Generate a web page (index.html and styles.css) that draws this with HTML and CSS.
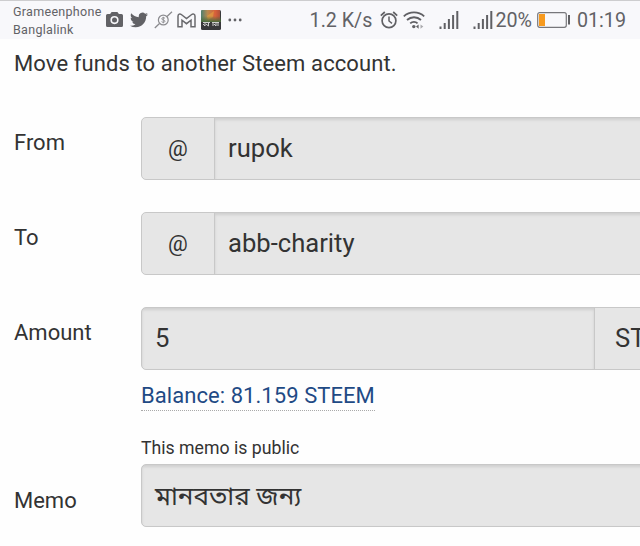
FILE: index.html
```
<!DOCTYPE html>
<html lang="en">
<head>
    <meta charset="UTF-8">
    <title>Transfer to Account</title>
    <link rel="stylesheet" href="styles.css">
</head>
<body>
    <!-- phone status bar -->
    <header class="status">
      <div class="carrier">
        <span>Grameenphone</span>
        <span>Banglalink</span>
      </div>
      <div class="notices">
        <svg class="camera" width="17" height="15" viewBox="0 0 17 15">
          <path fill="#626266" fill-rule="evenodd" d="M5.6 0h5.8l1.500 2H15.500a1.500 1.500 0 0 1 1.500 1.500v10a1.500 1.500 0 0 1-1.500 1.500h-14A1.500 1.500 0 0 1 0 13.500v-10A1.500 1.500 0 0 1 1.500 2h2.600zM8.500 4a4.100 4.100 0 1 0 0 8.200 4.100 4.100 0 0 0 0-8.200z"/>
          <circle cx="8.500" cy="8.100" r="2.500" fill="#626266"/>
        </svg>
        <svg class="bird" width="18" height="16" viewBox="0 2 24 20">
          <path fill="#626266" d="M23.953 4.570a10 10 0 0 1-2.825.775 4.958 4.958 0 0 0 2.163-2.723c-.951.555-2.005.959-3.127 1.184a4.920 4.920 0 0 0-8.384 4.482C7.690 8.095 4.067 6.130 1.640 3.162a4.822 4.822 0 0 0-.666 2.475c0 1.710.870 3.213 2.188 4.096a4.904 4.904 0 0 1-2.228-.616v.060a4.923 4.923 0 0 0 3.946 4.827 4.996 4.996 0 0 1-2.212.085 4.936 4.936 0 0 0 4.604 3.417 9.867 9.867 0 0 1-6.102 2.105c-.390 0-.779-.023-1.170-.067a13.995 13.995 0 0 0 7.557 2.209c9.053 0 13.998-7.496 13.998-13.985 0-.210 0-.420-.015-.630a9.935 9.935 0 0 0 2.460-2.548z"/>
        </svg>
        <svg class="coin" width="19" height="18" viewBox="0 0 19 18" fill="none" stroke="#8b8b8f">
          <circle cx="9.300" cy="9" r="4.900" stroke-width="1.200"/>
          <path d="M13 5.500L18 .8M5.500 12.500L.8 17" stroke-width="1.300"/>
          <path d="M11 7.300C10 6.300 7.600 6.500 7.700 7.900c.1 1.300 3.300.8 3.300 2.300 0 1.400-2.500 1.500-3.500.4M9.300 5.800v6.500" stroke-width=".9"/>
        </svg>
        <svg class="mail" width="19" height="15" viewBox="0 0 19 15" fill="none" stroke="#6a6a6e" stroke-width="1.500">
          <path d="M1 3.200C1 1 3 .5 4.300 1.500L9.500 5.500l5.200-4C16 .5 18 1 18 3.200V13.800h-4V7.200l-4.500 3.500L5 7.200v6.600H1z"/>
        </svg>
        <svg class="photo" width="20" height="20" viewBox="0 0 20 20">
          <defs>
            <linearGradient id="sunset" x1="0" y1="0" x2="1" y2="0">
              <stop offset="0" stop-color="#4f8070"/>
              <stop offset=".35" stop-color="#b98a50"/>
              <stop offset=".75" stop-color="#d9603a"/>
              <stop offset="1" stop-color="#b0503a"/>
            </linearGradient>
            <linearGradient id="shade" x1="0" y1="0" x2="0" y2="1">
              <stop offset=".5" stop-color="#4a6a3c" stop-opacity="0"/>
              <stop offset="1" stop-color="#4a6a3c"/>
            </linearGradient>
          </defs>
          <rect width="20" height="20" rx="1.500" fill="#39383b"/>
          <path fill="url(#sunset)" d="M1 0h18v12H0V1z"/>
          <path fill="#e8a13e" opacity=".6" d="M6 6l7-5-1 6-5 3z"/>
          <path fill="url(#shade)" d="M0 0h20v12H0z"/>
          <path stroke="#cfcecd" stroke-width="1" fill="none" d="M2 12.500h7M11 12.500h7M4 12v4L2 14M7.500 12v4L5 14M12 12v4M15 12v4l-2-2M17 12v4"/>
        </svg>
        <svg class="more" width="14" height="4" viewBox="0 0 14 4" fill="#626266">
          <circle cx="1.800" cy="2" r="1.400"/><circle cx="7" cy="2" r="1.400"/><circle cx="12.200" cy="2" r="1.400"/>
        </svg>
      </div>
      <div class="system">
        <span class="speed">1.2 K/s</span>
        <svg class="alarm" width="18" height="18" viewBox="0 0 18 18" fill="none" stroke="#606064">
          <circle cx="9" cy="9.800" r="6.900" stroke-width="1.700"/>
          <path d="M9 5.500V10l3 2.300" stroke-width="1.500"/>
          <path d="M.8 4.600L4.800 1M17.200 4.600L13.200 1" stroke-width="1.700"/>
        </svg>
        <svg class="wifi" width="22" height="18" viewBox="0 0 22 18" fill="none" stroke="#606064" stroke-width="1.800">
          <path d="M.8 5.400C6.500.1 15.500.1 21.200 5.400M4 9c4-3.700 10-3.700 14 0M7.200 12.400c2.100-1.900 5.300-1.900 7.400 0"/>
          <circle cx="10.800" cy="15.600" r="1.700" fill="#606064" stroke="none"/>
          <path fill="#606064" stroke="none" d="M13 15.600l2.600-2.200v4.400z"/>
          <path fill="#a9a9ad" stroke="none" d="M17.500 13.400l2.800 2.200-2.800 2.200z"/>
        </svg>
        <svg class="bars" width="20" height="18" viewBox="0 0 20 18" fill="#606064">
          <path d="M.5 15.500h2V18h-2zM4.700 12h2v6h-2zM8.900 8h2v10h-2zM13.100 4h2v14h-2zM17.300 0h2v18h-2z"/>
        </svg>
        <svg class="bars" width="20" height="18" viewBox="0 0 20 18" fill="#606064">
          <path d="M.5 15.500h2V18h-2zM4.700 12h2v6h-2zM8.900 8h2v10h-2zM13.100 4h2v14h-2zM17.300 0h2v18h-2z"/>
        </svg>
        <span class="percent">20%</span>
        <svg class="battery" width="34" height="16" viewBox="0 0 34 16">
          <rect x=".7" y=".7" width="28.600" height="14.600" rx="2" fill="none" stroke="#77777b" stroke-width="1.200"/>
          <rect x="2" y="2" width="6" height="12" fill="#f79a1e"/>
          <path fill="#606064" d="M31 3h2v9.500h-2z"/>
        </svg>
        <span class="clock">01:19</span>
      </div>
    </header>

    <!-- transfer form -->
    <main class="transfer">
      <p class="intro">Move funds to another Steem account.</p>

      <div class="row">
        <label class="name">From</label>
        <div class="group">
          <span class="at">@</span>
          <div class="field">rupok</div>
        </div>
      </div>

      <div class="row">
        <label class="name">To</label>
        <div class="group">
          <span class="at">@</span>
          <div class="field">abb-charity</div>
        </div>
      </div>

      <div class="row amount">
        <label class="name">Amount</label>
        <div class="group">
          <div class="field">5</div>
          <span class="unit">STEEM</span>
        </div>
      </div>
      <div class="balance"><a>Balance: 81.159 STEEM</a></div>

      <div class="hint">This memo is public</div>
      <div class="row">
        <label class="name memo">Memo</label>
        <div class="group">
          <div class="field bn" lang="bn">মানবতার জন্য</div>
        </div>
      </div>
    </main>
</body>
</html>
```

FILE: styles.css
```
*{
  box-sizing: border-box;
}
body{
  margin: 0;
  height: 546px;
  overflow: hidden;
  background: #fefefe;
  color: #333;
  font-family: Roboto, "Noto Sans Bengali", "Noto Sans", sans-serif;
}

/* status bar */
.status{
  display: flex;
  justify-content: space-between;
  height: 39px;
  padding: 0 14px 0 13px;
  border-top: 1px solid #cdcdcf;
  background: #f8f8fb;
  color: #626266;
}
.carrier{
  display: flex;
  flex-direction: column;
  width: 93px;
  padding-top: 2px;
  font-size: 12.5px;
  line-height: 18px;
  letter-spacing: .3px;
}
.notices{
  display: flex;
  align-items: center;
  flex: 1;
}
.camera{
  margin-top: -2px;
}
.bird{
  margin-left: 7px;
}
.coin{
  margin-left: 6px;
}
.mail{
  margin-left: 4px;
}
.photo{
  margin-left: 5px;
}
.more{
  margin-left: 7px;
  margin-top: -1px;
}
.system{
  display: flex;
  align-items: center;
  font-size: 19.7px;
}
.alarm{
  margin-left: 8px;
}
.wifi{
  margin-left: 5px;
}
.bars{
  margin-left: 14px;
}
.percent{
  margin-left: 2px;
}
.battery{
  margin-left: 5px;
}
.clock{
  margin-left: 6px;
}

/* form */
.transfer{
  width: 760px;
  padding: 10px 0 0 14px;
}
.intro{
  margin: 0 0 38px;
  font-size: 22px;
  line-height: 30px;
  letter-spacing: .1px;
}
.row{
  display: flex;
  height: 63px;
  margin-bottom: 32px;
}
.name{
  width: 127px;
  padding-top: 11px;
  font-size: 22px;
  line-height: 30px;
}
.memo{
  padding-top: 22px;
}
.group{
  display: flex;
  flex: 1;
  border: 1px solid #c8c8c8;
  border-radius: 5px;
  background: #e6e6e6;
  overflow: hidden;
}
.at{
  width: 72px;
  font-size: 22px;
  line-height: 62px;
  text-align: center;
}
.field{
  flex: 1;
  padding-left: 13px;
  box-shadow: inset 0 2px 3px rgba(0,0,0,.1);
  font-size: 25.6px;
  line-height: 61px;
  white-space: nowrap;
}
.bn{
  font-size: 26px;
  line-height: 62px;
}
.at + .field{
  border-left: 1px solid #c8c8c8;
}
.amount{
  margin-bottom: 11px;
}
.amount .field{
  flex: 0 0 452px;
}
.unit{
  flex: 1;
  padding-left: 20px;
  border-left: 1px solid #c8c8c8;
  font-size: 25.6px;
  line-height: 61px;
}
.balance{
  height: 55px;
  padding-left: 127px;
  font-size: 22px;
  line-height: 29px;
  letter-spacing: .06px;
}
.balance a{
  display: inline-block;
  border-bottom: 1px dotted #aaa;
  color: #1f4a85;
}
.hint{
  height: 28px;
  padding-left: 127px;
  font-size: 17.7px;
  line-height: 25px;
}
```
